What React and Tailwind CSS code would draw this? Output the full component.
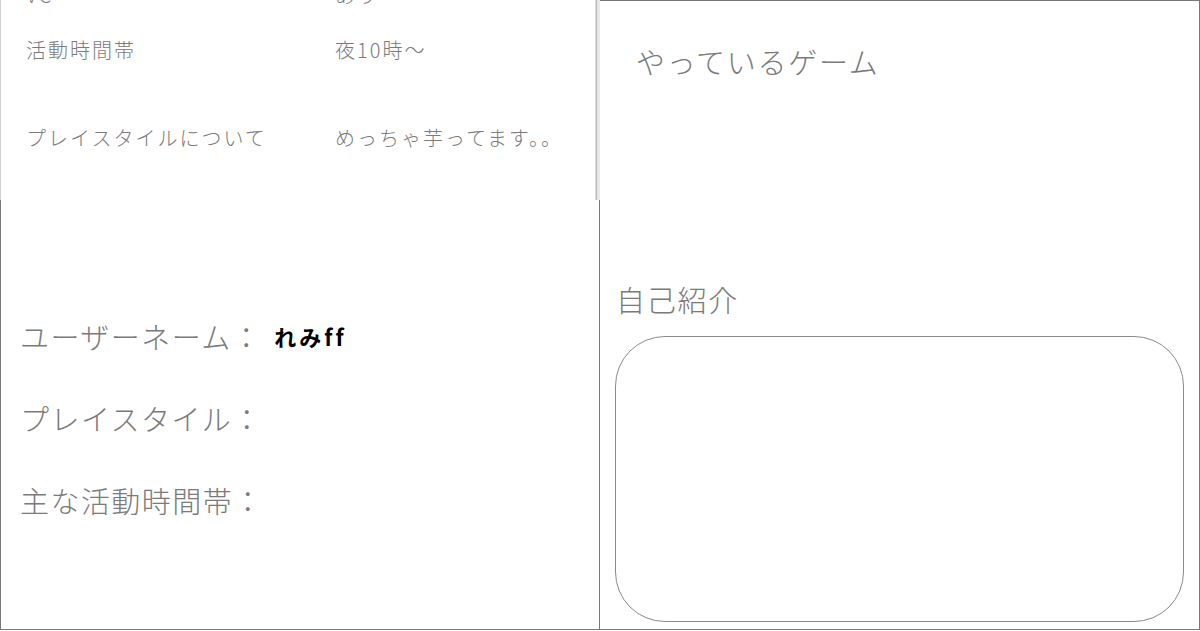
const font = { fontFamily: '"Noto Sans CJK JP", "Noto Sans", sans-serif' }

const details = [
  { label: 'VC', value: 'あり', gap: 'mt-0' },
  { label: '活動時間帯', value: '夜10時〜', gap: 'mt-[35px]' },
  { label: 'プレイスタイルについて', value: 'めっちゃ芋ってます。。', gap: 'mt-[68px]' },
]

function DetailBox() {
  return (
    <div className="flex h-[200px] border-l border-[#cfcfcf]">
      <div className="flex-1 overflow-hidden">
        <div className="-mt-[15px] font-light text-[#7a7a7a]">
          {details.map((row) => (
            <div key={row.label} className={`flex text-[20px] leading-[20px] tracking-[0.1em] ${row.gap}`}>
              <div className="w-[334px] pl-[25px]">{row.label}</div>
              <div>{row.value}</div>
            </div>
          ))}
        </div>
      </div>
      {/* scrollbar */}
      <div className="flex w-[5px]">
        <span className="w-px bg-[#dcdcdc]" />
        <span className="w-px bg-[#b8b8b8]" />
        <span className="flex-1 bg-[#e8e8e8]" />
      </div>
    </div>
  )
}

function ProfileLine({ label, children }) {
  return (
    <div className="flex items-center text-[29px] leading-[40px] tracking-[0.05em] text-[#7a7a7a]">
      <span className="font-light">{label}：</span>
      {children}
    </div>
  )
}

export default function App() {
  return (
    <div className="flex h-[630px] w-[1200px] bg-white" style={font}>
      <div className="flex w-[600px] flex-col">
        <DetailBox />
        <div className="flex flex-1 flex-col gap-[42px] border-b border-l border-r border-[#777] pl-[19px] pt-[116px]">
          <ProfileLine label="ユーザーネーム">
            <span className="ml-[12px] text-[22px] font-bold tracking-[0.14em] text-black [font-variant-ligatures:none]">
              れみff
            </span>
          </ProfileLine>
          <ProfileLine label="プレイスタイル" />
          <ProfileLine label="主な活動時間帯" />
        </div>
      </div>

      <div className="flex w-[600px] flex-col border-b border-r border-t border-[#777]">
        <div className="pl-[36px] pt-[40px] text-[29px] font-light leading-[40px] tracking-[0.06em] text-[#7a7a7a]">
          やっているゲーム
        </div>
        <div className="mt-[198px] pl-[16px] text-[29px] font-light leading-[40px] tracking-[0.06em] text-[#7a7a7a]">
          自己紹介
        </div>
        <div className="ml-[15px] mt-[17px] h-[286px] w-[569px] rounded-[50px] border border-[#8a8a8a]" />
      </div>
    </div>
  )
}
